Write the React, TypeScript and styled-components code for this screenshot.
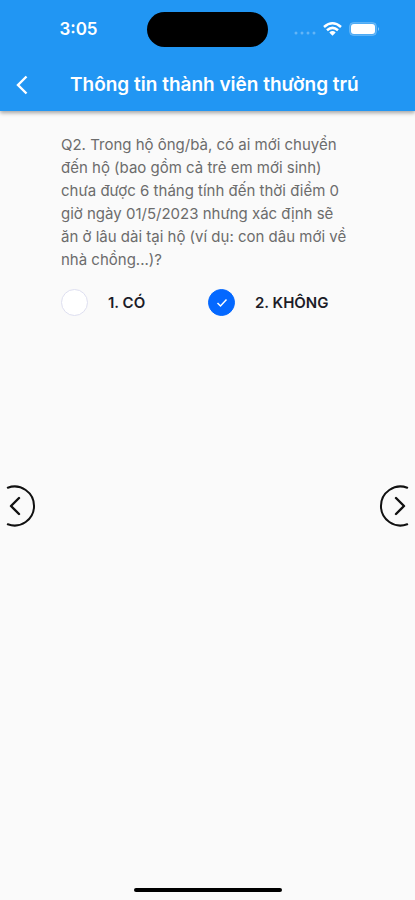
import { useState } from 'react';
import styled, { createGlobalStyle } from 'styled-components';

const GlobalStyle = createGlobalStyle`
  *, *::before, *::after { box-sizing: border-box; }
  body {
    margin: 0;
    background: #fafafa;
    font-family: Inter, Roboto, "Liberation Sans", sans-serif;
  }
`;

const Screen = styled.div`
  position: relative;
  display: flex;
  flex-direction: column;
  min-height: 100vh;
  background: #fafafa;
`;

const Header = styled.header`
  background: #2196f3;
  color: #fff;
  box-shadow: 0 2px 4px rgba(0, 0, 0, 0.35);
`;

const StatusBar = styled.div`
  display: grid;
  grid-template-columns: 1fr auto 1fr;
  align-items: center;
  height: 58px;
`;

const Clock = styled.time`
  justify-self: center;
  padding-left: 10px;
  font-size: 17px;
  line-height: 20px;
  font-weight: 600;
`;

const Island = styled.div`
  width: 121px;
  height: 35px;
  border-radius: 18px;
  background: #000;
`;

const StatusIcons = styled.div`
  display: flex;
  align-items: center;
  justify-self: center;
  gap: 7px;
  padding-right: 9px;
`;

const TitleBar = styled.div`
  display: flex;
  align-items: center;
  height: 53px;
  padding-right: 50px;
`;

const BackButton = styled.button`
  display: flex;
  flex: none;
  align-items: center;
  justify-content: center;
  width: 44px;
  height: 44px;
  padding: 0;
  border: 0;
  background: none;
  color: inherit;
  cursor: pointer;
`;

const Title = styled.h1`
  flex: 1;
  margin: 0;
  padding-left: 26px;
  font-size: 19px;
  line-height: 24px;
  font-weight: 600;
  white-space: nowrap;
`;

const Main = styled.main`
  flex: 1;
  display: grid;
  grid-template-columns: 54px 1fr 54px;
  align-items: center;
  padding: 0 6px;
`;

const PageButton = styled.button<{ $side: 'start' | 'end' }>`
  display: flex;
  justify-self: ${({ $side }) => $side};
  padding: 0;
  border: 0;
  background: none;
  color: #111;
  cursor: pointer;
`;

const Question = styled.fieldset`
  align-self: start;
  min-width: 0;
  margin: 0;
  padding: 22px 0 0 1px;
  border: 0;
`;

const Prompt = styled.legend`
  float: left;
  width: 100%;
  padding: 0 6px 0 0;
  color: #6c6c6c;
  font-size: 15px;
  line-height: 23px;
  font-weight: 400;
`;

const Options = styled.div`
  clear: both;
  display: grid;
  grid-template-columns: 1fr 1fr;
  padding-top: 18px;
`;

const Option = styled.label`
  display: flex;
  align-items: center;
  gap: 20px;
  color: #1c1c28;
  font-size: 15px;
  line-height: 20px;
  font-weight: 600;
  white-space: nowrap;
  cursor: pointer;
`;

const Radio = styled.input`
  appearance: none;
  flex: none;
  grid-area: 1 / 1;
  width: 27px;
  height: 27px;
  margin: 0;
  border: 1px solid #dedff0;
  border-radius: 50%;
  background: #fff;
  cursor: pointer;
  &:checked {
    border-color: #0468ff;
    background: #0468ff;
  }
`;

const RadioBox = styled.span`
  display: grid;
  place-items: center;
  svg {
    grid-area: 1 / 1;
    pointer-events: none;
  }
`;

const HomeIndicator = styled.div`
  position: absolute;
  bottom: 8px;
  left: 50%;
  width: 148px;
  height: 4px;
  border-radius: 2px;
  background: #000;
  transform: translateX(-50%);
`;

const choices = ['1. CÓ', '2. KHÔNG'];

export default function App() {
  const [selected, setSelected] = useState(1);

  return (
    <>
      <GlobalStyle />
      <Screen>
        <Header>
          <StatusBar>
            <Clock>3:05</Clock>
            <Island />
            <StatusIcons>
              <svg width="22" height="16" viewBox="0 0 22 16" fill="#fff" fillOpacity=".3" aria-hidden="true">
                <circle cx="2" cy="12" r="1.5" />
                <circle cx="8" cy="12" r="1.5" />
                <circle cx="14" cy="12" r="1.5" />
                <circle cx="20" cy="12" r="1.5" />
              </svg>
              <svg width="19" height="14" viewBox="0 0 19 14" fill="none" stroke="#fff" strokeWidth="2.5" aria-hidden="true">
                <path d="M1 5Q9.500-2.400 18 5M4 8.300Q9.500 3.400 15 8.300" />
                <path d="M6.300 10.500Q9.500 7.600 12.700 10.500L9.500 13.700Z" fill="#fff" stroke="none" />
              </svg>
              <svg width="31" height="14" viewBox="0 0 31 14" aria-hidden="true">
                <rect x=".5" y=".5" width="27" height="13" rx="4" fill="#fff" fillOpacity=".2" stroke="#fff" strokeOpacity=".2" />
                <rect x="2" y="2" width="24" height="10" rx="3" fill="#fff" />
                <path d="M29 5Q31 7 29 9Z" fill="#fff" fillOpacity=".5" />
              </svg>
            </StatusIcons>
          </StatusBar>
          <TitleBar>
            <BackButton aria-label="Quay lại">
              <svg width="12" height="20" viewBox="0 0 12 20" fill="none" stroke="currentColor" strokeWidth="2.4" aria-hidden="true">
                <path d="M10.500 1.500 2 10l8.500 8.500" />
              </svg>
            </BackButton>
            <Title>Thông tin thành viên thường trú</Title>
          </TitleBar>
        </Header>

        <Main>
          <PageButton $side="start" aria-label="Trang trước">
            <svg width="30" height="42" viewBox="0 0 30 42" fill="none" stroke="currentColor" strokeWidth="2" strokeLinecap="round" strokeLinejoin="round" aria-hidden="true">
              <path d="M1.800 2.700A19.500 19.500 0 1 1 1.800 39.300" />
              <path d="m13 13-8 8 8 8" strokeWidth="2.400" />
            </svg>
          </PageButton>
          <Question>
            <Prompt>
              Q2. Trong hộ ông/bà, có ai mới chuyển đến hộ (bao gồm cả trẻ em mới sinh) chưa được 6 tháng
              tính đến thời điểm 0 giờ ngày 01/5/2023 nhưng xác định sẽ ăn ở lâu dài tại hộ (ví dụ: con dâu
              mới về nhà chồng...)?
            </Prompt>
            <Options>
              {choices.map((choice, index) => (
                <Option key={choice}>
                  <RadioBox>
                    <Radio
                      type="radio"
                      name="new-member"
                      checked={selected === index}
                      onChange={() => setSelected(index)}
                    />
                    {selected === index && (
                      <svg width="12" height="10" viewBox="0 0 12 10" fill="none" stroke="#fff" strokeWidth="1.500" aria-hidden="true">
                        <path d="m1.500 5 3 3 6-6.500" />
                      </svg>
                    )}
                  </RadioBox>
                  {choice}
                </Option>
              ))}
            </Options>
          </Question>
          <PageButton $side="end" aria-label="Trang sau">
            <svg width="30" height="42" viewBox="0 0 30 42" fill="none" stroke="currentColor" strokeWidth="2" strokeLinecap="round" strokeLinejoin="round" aria-hidden="true">
              <path d="M28.200 2.700A19.500 19.500 0 1 0 28.200 39.300" />
              <path d="m17 13 8 8-8 8" strokeWidth="2.400" />
            </svg>
          </PageButton>
        </Main>
        <HomeIndicator />
      </Screen>
    </>
  );
}
